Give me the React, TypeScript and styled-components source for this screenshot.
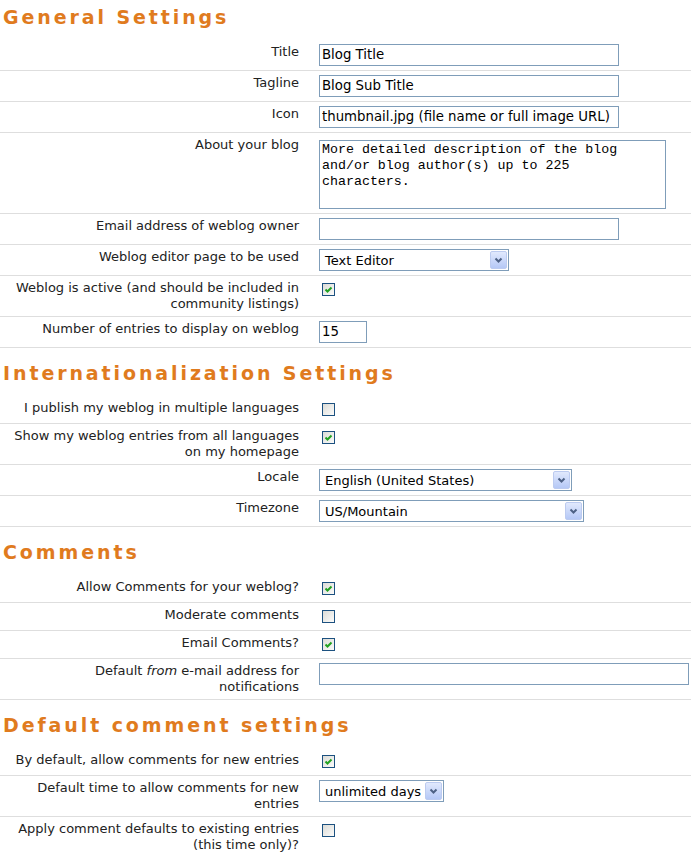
import React from "react";
import styled, { createGlobalStyle } from "styled-components";

const GlobalStyle = createGlobalStyle`
  body {
    margin: 0;
    background: #fff;
    font-family: "DejaVu Sans", Verdana, sans-serif;
    font-size: 13px;
    color: #222;
  }
`;

const Page = styled.div`
  width: 691px;
`;

const SectionTitle = styled.h2<{ $first?: boolean }>`
  margin: ${(p) => (p.$first ? "6px" : "14px")} 0 12px 3px;
  font-size: 19px;
  line-height: 22px;
  font-weight: bold;
  letter-spacing: 2.9px;
  color: #e07b1e;
`;

const Row = styled.div`
  display: grid;
  grid-template-columns: 303px 1fr;
  border-bottom: 1px solid #dedede;
`;

const Label = styled.div`
  padding: 4px 4px 4px 0;
  text-align: right;
  line-height: 16px;
  white-space: nowrap;
`;

const Field = styled.div`
  padding: 4px 0 4px 16px;
`;

const TextInput = styled.input<{ $width: number }>`
  display: block;
  box-sizing: border-box;
  width: ${(p) => p.$width}px;
  height: 22px;
  margin: 0;
  padding: 0 2px 1px;
  border: 1px solid #7f9db9;
  font: 13.3px "DejaVu Sans", sans-serif;
  color: #000;
  background: #fff;
  outline: none;
`;

const TextArea = styled.textarea`
  display: block;
  box-sizing: border-box;
  width: 347px;
  height: 69px;
  margin: 3px 0 0;
  padding: 1px 2px;
  border: 1px solid #7f9db9;
  font: 13.3px/16px "Liberation Mono", "Courier New", monospace;
  color: #000;
  resize: none;
  outline: none;
`;

const SelectBox = styled.div<{ $width: number }>`
  box-sizing: border-box;
  width: ${(p) => p.$width}px;
  height: 22px;
  display: flex;
  align-items: center;
  justify-content: space-between;
  gap: 4px;
  padding: 0 1px 0 5px;
  border: 1px solid #7f9db9;
  background: #fff;
  color: #000;
  font-size: 13px;
  white-space: nowrap;
`;

const SelectArrow = styled.span`
  box-sizing: border-box;
  flex: none;
  width: 17px;
  height: 18px;
  display: flex;
  align-items: center;
  justify-content: center;
  border: 1px solid #bccbf0;
  border-radius: 2px;
  background: linear-gradient(#e1e9fd, #b5c8f6);
`;

const Box = styled.span`
  display: flex;
  align-items: center;
  justify-content: center;
  box-sizing: border-box;
  width: 13px;
  height: 13px;
  margin: 3px 0 3px 3px;
  border: 1px solid #1c5180;
  background: linear-gradient(135deg, #dcdcd7, #fbfbfa);
`;

const Select = ({ value, width }: { value: string; width: number }) => (
  <SelectBox $width={width}>
    <span>{value}</span>
    <SelectArrow>
      <svg width="9" height="7" viewBox="0 0 9 7">
        <polyline points="1.5,1.5 4.5,4.5 7.5,1.5" fill="none" stroke="#4d6185" strokeWidth="2" />
      </svg>
    </SelectArrow>
  </SelectBox>
);

const Checkbox = ({ checked }: { checked?: boolean }) => (
  <Box>
    {checked && (
      <svg width="9" height="9" viewBox="0 0 9 9">
        <polyline points="1.5,4.5 3.5,6.5 7.5,2.5" fill="none" stroke="#21a121" strokeWidth="2" />
      </svg>
    )}
  </Box>
);

const Setting = ({ label, children }: { label: React.ReactNode; children: React.ReactNode }) => (
  <Row>
    <Label>{label}</Label>
    <Field>{children}</Field>
  </Row>
);

export default function App() {
  return (
    <Page>
      <GlobalStyle />
      <SectionTitle $first>General Settings</SectionTitle>
      <Setting label="Title">
        <TextInput $width={300} defaultValue="Blog Title" />
      </Setting>
      <Setting label="Tagline">
        <TextInput $width={300} defaultValue="Blog Sub Title" />
      </Setting>
      <Setting label="Icon">
        <TextInput $width={300} defaultValue="thumbnail.jpg (file name or full image URL)" />
      </Setting>
      <Setting label="About your blog">
        <TextArea
          defaultValue={"More detailed description of the blog\nand/or blog author(s) up to 225\ncharacters."}
        />
      </Setting>
      <Setting label="Email address of weblog owner">
        <TextInput $width={300} defaultValue="" />
      </Setting>
      <Setting label="Weblog editor page to be used">
        <Select value="Text Editor" width={190} />
      </Setting>
      <Setting
        label={
          <>
            Weblog is active (and should be included in
            <br />
            community listings)
          </>
        }
      >
        <Checkbox checked />
      </Setting>
      <Setting label="Number of entries to display on weblog">
        <TextInput $width={48} defaultValue="15" />
      </Setting>

      <SectionTitle>Internationalization Settings</SectionTitle>
      <Setting label="I publish my weblog in multiple languages">
        <Checkbox />
      </Setting>
      <Setting
        label={
          <>
            Show my weblog entries from all languages
            <br />
            on my homepage
          </>
        }
      >
        <Checkbox checked />
      </Setting>
      <Setting label="Locale">
        <Select value="English (United States)" width={253} />
      </Setting>
      <Setting label="Timezone">
        <Select value="US/Mountain" width={265} />
      </Setting>

      <SectionTitle>Comments</SectionTitle>
      <Setting label="Allow Comments for your weblog?">
        <Checkbox checked />
      </Setting>
      <Setting label="Moderate comments">
        <Checkbox />
      </Setting>
      <Setting label="Email Comments?">
        <Checkbox checked />
      </Setting>
      <Setting
        label={
          <>
            Default <em>from</em> e-mail address for
            <br />
            notifications
          </>
        }
      >
        <TextInput $width={370} defaultValue="" />
      </Setting>

      <SectionTitle>Default comment settings</SectionTitle>
      <Setting label="By default, allow comments for new entries">
        <Checkbox checked />
      </Setting>
      <Setting
        label={
          <>
            Default time to allow comments for new
            <br />
            entries
          </>
        }
      >
        <Select value="unlimited days" width={125} />
      </Setting>
      <Setting
        label={
          <>
            Apply comment defaults to existing entries
            <br />
            (this time only)?
          </>
        }
      >
        <Checkbox />
      </Setting>
    </Page>
  );
}
